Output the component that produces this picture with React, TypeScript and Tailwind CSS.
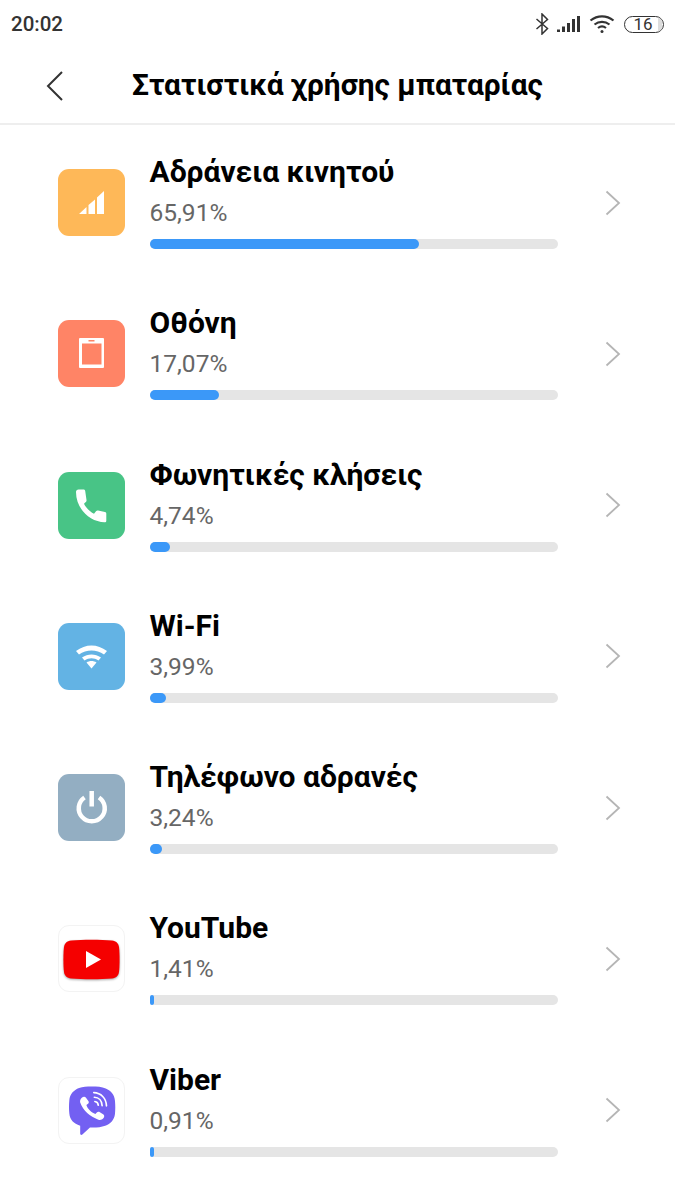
const items = [
  { name: "Αδράνεια κινητού", pct: "65,91%", width: 66, icon: "cell" },
  { name: "Οθόνη", pct: "17,07%", width: 17.07, icon: "screen" },
  { name: "Φωνητικές κλήσεις", pct: "4,74%", width: 5, icon: "phone" },
  { name: "Wi-Fi", pct: "3,99%", width: 4, icon: "wifi" },
  { name: "Τηλέφωνο αδρανές", pct: "3,24%", width: 3.1, icon: "power" },
  { name: "YouTube", pct: "1,41%", width: 1.1, icon: "youtube" },
  { name: "Viber", pct: "0,91%", width: 1, icon: "viber" },
];

function RowIcon({ icon }: { icon: string }) {
  if (icon === "cell") {
    return (
      <div className="flex h-[67px] w-[67px] items-center justify-center rounded-[11px] bg-[#feb858]">
        <svg width="67" height="67" viewBox="0 0 67 67" fill="#fff">
          <path d="M21 45l7.500-7v7zM30.500 45v-9l6.500-5.500v14.500zM39 45v-16.500l7-6.500v23z" />
        </svg>
      </div>
    );
  }
  if (icon === "screen") {
    return (
      <div className="flex h-[67px] w-[67px] items-center justify-center rounded-[11px] bg-[#ff8466]">
        <svg width="67" height="67" viewBox="0 0 67 67">
          <rect x="21" y="18" width="25" height="30" rx="1" fill="#fff" />
          <rect x="24" y="23.500" width="19.500" height="21" fill="#ff8466" />
          <rect x="30.500" y="20" width="6" height="1.500" fill="#ff8466" />
        </svg>
      </div>
    );
  }
  if (icon === "phone") {
    return (
      <div className="flex h-[67px] w-[67px] items-center justify-center rounded-[11px] bg-[#48c486]">
        <svg width="67" height="67" viewBox="0 0 67 67" fill="#fff">
          <path d="M18 20c0-1.500 1-2.500 2.500-2.500h5c1 0 1.500.5 1.700 1.500l1.300 9c.1.700 0 1.300-.5 1.800l-2 2c2 4 6 8 10 10l2-2.500c.5-.6 1.200-.8 2-.7l7 1.400c.8.2 1.300.8 1.300 1.700v7c0 1-.7 1.500-1.700 1.500C32 50 18 37 18 20z" />
        </svg>
      </div>
    );
  }
  if (icon === "wifi") {
    return (
      <div className="flex h-[67px] w-[67px] items-center justify-center rounded-[11px] bg-[#63b3e4]">
        <svg width="67" height="67" viewBox="0 0 67 67" fill="#fff">
          <path d="M18 28c9.500-7.500 21.500-7.500 31 0l-3 3.500c-7.500-5.500-17.500-5.500-25 0z" />
          <path d="M24 34.500c6-4 13-4 19 0l-2.500 3c-4.500-3-9.500-3-14 0z" />
          <path d="M28.500 39.500c3-2 7-2 10 0l-5 6z" />
        </svg>
      </div>
    );
  }
  if (icon === "power") {
    return (
      <div className="flex h-[67px] w-[67px] items-center justify-center rounded-[11px] bg-[#93aec2]">
        <svg width="67" height="67" viewBox="0 0 67 67" fill="none" stroke="#fff">
          <path d="M26.500 23.500a13 13 0 1 0 14.500 0" strokeWidth="4.500" />
          <path d="M33.700 17v15.500" strokeWidth="4.500" />
        </svg>
      </div>
    );
  }
  if (icon === "youtube") {
    return (
      <div className="flex h-[67px] w-[67px] items-center justify-center rounded-[11px] border border-[#f3f3f3] bg-white">
        <svg width="59" height="41" viewBox="0 0 59 41" className="mt-px drop-shadow-[0_1px_1px_rgba(0,0,0,0.35)]">
          <path d="M9 1.500C20 .5 39 .5 50 1.500c4 .4 6.500 3 7 6.500.8 6 .8 19 0 25-.5 3.500-3 6-7 6.500-11 1-30 1-41 0-4-.5-6.500-3-7-6.500-.8-6-.8-19 0-25 .5-3.500 3-6.100 7-6.500z" fill="#f50000" />
          <path d="M24 12l15 8.500-15 8.500z" fill="#fff" />
        </svg>
      </div>
    );
  }
  return (
    <div className="flex h-[67px] w-[67px] items-center justify-center rounded-[11px] border border-[#f3f3f3] bg-white">
      <svg width="67" height="67" viewBox="0 0 67 67">
        <g transform="translate(34.500 34.500) scale(1.12 1.05) translate(-33.800 -33)">
          <path
            d="M33 8.500c5 0 9.500.3 13 2 5 2.300 8 6 8.500 12 .4 4.500.4 9 0 13-.7 6-4 9.500-9 11.500-4 1.500-9 2-14 1.700l-7 7c-.8.700-2 .3-2-.8v-8c-6-2-9.500-6-10-12-.4-4-.4-8.500 0-13 .5-6 4-10 9-12 3.500-1.300 7-1.400 11.500-1.400z"
            fill="#7360f2"
          />
          <path
            d="M24 19.500c1.500-1.300 3-1.200 4 .2l2 3c.7 1.100.5 2-.3 2.800l-1.500 1.200c.9 3.500 4.500 7.500 8.300 8.800l1.300-1.500c.8-.9 1.800-1 2.800-.3l3 2c1.300 1 1.400 2.500.2 4-1.200 1.400-2.700 2-4.500 1.400-8-3-14-8.500-16.800-16.800-.4-1.700.2-3.400 1.500-4.800z"
            fill="#fff"
          />
          <path
            d="M35 14.500c6.500.3 11.500 5.300 11.700 13M35.500 19c4 .2 7 3.300 7.200 8.300M36 23.300c2 .2 3 1.500 3.200 3.700"
            fill="none"
            stroke="#fff"
            strokeWidth="1.500"
            strokeLinecap="round"
          />
        </g>
      </svg>
    </div>
  );
}

function Row({ item }: { item: (typeof items)[number] }) {
  return (
    <div className="flex h-[151.25px] items-center pl-[58px]">
      <RowIcon icon={item.icon} />
      <div className="ml-[24.500px] w-[408.500px] pb-[3px]">
        <div className="text-[30px] leading-[38px] font-bold text-black">{item.name}</div>
        <div className="mt-[7px] text-[24.500px] leading-[30px] text-[#666666]">{item.pct}</div>
        <div className="mt-[11px] h-[10px] rounded-full bg-[#e5e5e5]">
          <div className="h-full rounded-full bg-[#3b98f8]" style={{ width: `${item.width}%` }} />
        </div>
      </div>
      <svg width="16" height="26" viewBox="0 0 16 26" fill="none" stroke="#b5b5b5" strokeWidth="1.800" className="ml-[47px]">
        <path d="M1.500 1.500L14 13 1.500 24.500" />
      </svg>
    </div>
  );
}

export default function App() {
  return (
    <div className="h-[1200px] w-[675px] overflow-hidden bg-white font-['Roboto',sans-serif]">
      <div className="flex h-[48px] items-center justify-between pr-[11px] pl-[11px]">
        <span className="text-[20.500px] font-medium text-[#333333]">20:02</span>
        <div className="flex items-center">
          <svg width="14" height="22" viewBox="0 0 14 22" fill="none" stroke="#333" strokeWidth="1.500">
            <path d="M1.500 6l11 9.500L7 21V1l5.500 5.500L1.500 16" />
          </svg>
          <svg width="24" height="18" viewBox="0 0 24 18" fill="#333" className="ml-[8px]">
            <rect x="0" y="14.500" width="3" height="2.500" />
            <rect x="5" y="11.500" width="3" height="5.500" />
            <rect x="10" y="8" width="3" height="9" />
            <rect x="15" y="4" width="3" height="13" />
            <rect x="20" y="1" width="3" height="16" />
          </svg>
          <svg width="26" height="20" viewBox="0 0 26 20" fill="none" stroke="#333" strokeWidth="2.200" className="ml-[8px]">
            <path d="M1.500 6.500c7-5.500 16-5.500 23 0M5.500 10.500c4.500-3.500 10.500-3.500 15 0M9 14c2.500-2 5.500-2 8 0" />
            <circle cx="13" cy="17.500" r="1.500" fill="#333" stroke="none" />
          </svg>
          <div className="relative ml-[9px] flex h-[17px] w-[40px] items-center justify-center rounded-full border-[1.500px] border-[#333] text-[17px] leading-[14px] text-[#333333]">
            <span className="-ml-[2px]">16</span>
            <div className="absolute top-[1px] right-[1px] bottom-[1px] w-[4px] rounded-r-full bg-[#dddddd]" />
          </div>
        </div>
      </div>
      <div className="flex h-[77px] items-center border-b-2 border-[#eeeeee]">
        <svg width="18" height="32" viewBox="0 0 18 32" fill="none" stroke="#333" strokeWidth="2" className="ml-[46px]">
          <path d="M16 2L2 16l14 14" />
        </svg>
        <span className="ml-[68px] text-[29.850px] font-bold text-black">Στατιστικά χρήσης μπαταρίας</span>
      </div>
      <div className="pt-[2px]">
        {items.map((item) => (
          <Row key={item.name} item={item} />
        ))}
      </div>
    </div>
  );
}
